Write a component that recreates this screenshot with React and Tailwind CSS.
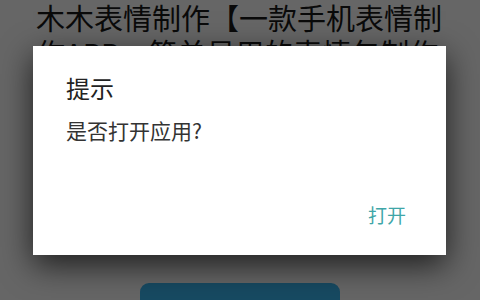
import React from "react";

const font = { fontFamily: '"Noto Sans CJK SC", "Noto Sans", sans-serif' };

const App = () => {
  return (
    <div className="relative w-[480px] h-[300px] overflow-hidden bg-white" style={font}>
      {/* page behind the dialog */}
      <div className="flex flex-col pl-[36px]">
        <p className="text-[29px] leading-[35px] text-[#1a1a1a] whitespace-nowrap">
          木木表情制作【一款手机表情制
        </p>
        <p className="text-[29px] leading-[35px] text-[#1a1a1a] whitespace-nowrap">
          作APP，简单易用的表情包制作
        </p>
        <div className="flex justify-center mt-[213px] pr-[36px]">
          <button className="w-[200px] h-[44px] rounded-[9px] bg-[#3ab8f5]"></button>
        </div>
      </div>

      {/* dim layer + dialog */}
      <div className="absolute inset-0 bg-[rgba(0,0,0,0.6)]">
        <div className="absolute left-[33px] top-[46px] w-[413px] h-[209px] bg-white shadow-[0_10px_30px_rgba(0,0,0,0.7)] flex flex-col pl-[33px] pr-[40px] pt-[30px]">
          <h1 className="text-[24px] leading-[24px] text-[#222]">提示</h1>
          <p className="mt-[20px] text-[21px] leading-[21px] text-[#333]">是否打开应用?</p>
          <div className="flex justify-end mt-[64px]">
            <button className="text-[19px] leading-[19px] text-[#3fa6a8]">打开</button>
          </div>
        </div>
      </div>
    </div>
  );
};

export default App;
